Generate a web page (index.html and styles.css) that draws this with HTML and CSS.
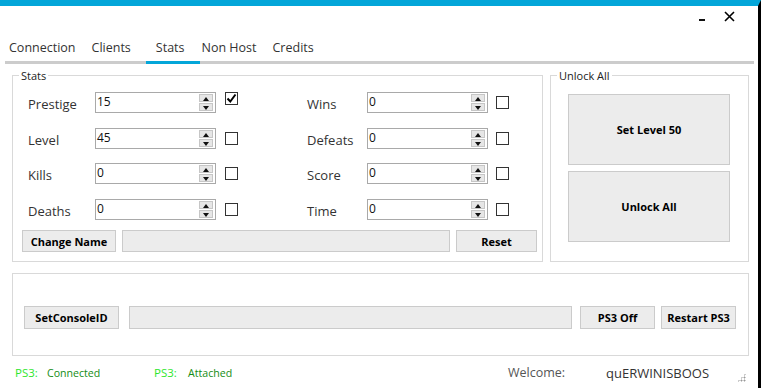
FILE: index.html
```html
<!DOCTYPE html>
<html lang="en">
<head>
    <meta charset="UTF-8">
    <title>PS3 Tool</title>
    <link rel="stylesheet" href="styles.css">
</head>
<body>
    <div class="window">
        <div class="titlebar">
            <span class="ctl-min"></span>
            <svg class="ctl-close" width="11" height="11" viewBox="0 0 11 11">
                <path d="M1 1 L10 10 M10 1 L1 10" stroke="#000" stroke-width="1.6" fill="none"/>
            </svg>
        </div>

        <div class="tabs">
            <span class="tab">Connection</span>
            <span class="tab">Clients</span>
            <span class="tab active">Stats</span>
            <span class="tab">Non Host</span>
            <span class="tab">Credits</span>
        </div>

        <div class="page">
            <div class="top-row">
                <fieldset class="group stats">
                    <legend>Stats</legend>
                    <div class="group-inner">
                        <div class="stat-grid">
                            <span class="stat-label">Prestige</span>
                            <div class="spin"><span class="spin-value">15</span><span class="spin-btns"><i class="up"></i><i class="down"></i></span></div>
                            <span class="check checked"><svg width="11" height="11" viewBox="0 0 11 11"><path d="M1.5 5.5 L4.3 8.5 L9.5 1.5" stroke="#000" stroke-width="2" fill="none"/></svg></span>
                            <span class="stat-label">Wins</span>
                            <div class="spin"><span class="spin-value">0</span><span class="spin-btns"><i class="up"></i><i class="down"></i></span></div>
                            <span class="check"></span>

                            <span class="stat-label">Level</span>
                            <div class="spin"><span class="spin-value">45</span><span class="spin-btns"><i class="up"></i><i class="down"></i></span></div>
                            <span class="check"></span>
                            <span class="stat-label">Defeats</span>
                            <div class="spin"><span class="spin-value">0</span><span class="spin-btns"><i class="up"></i><i class="down"></i></span></div>
                            <span class="check"></span>

                            <span class="stat-label">Kills</span>
                            <div class="spin"><span class="spin-value">0</span><span class="spin-btns"><i class="up"></i><i class="down"></i></span></div>
                            <span class="check"></span>
                            <span class="stat-label">Score</span>
                            <div class="spin"><span class="spin-value">0</span><span class="spin-btns"><i class="up"></i><i class="down"></i></span></div>
                            <span class="check"></span>

                            <span class="stat-label">Deaths</span>
                            <div class="spin"><span class="spin-value">0</span><span class="spin-btns"><i class="up"></i><i class="down"></i></span></div>
                            <span class="check"></span>
                            <span class="stat-label">Time</span>
                            <div class="spin"><span class="spin-value">0</span><span class="spin-btns"><i class="up"></i><i class="down"></i></span></div>
                            <span class="check"></span>
                        </div>
                        <div class="name-row">
                            <button class="btn btn-name">Change Name</button>
                            <div class="textbox"></div>
                            <button class="btn btn-reset">Reset</button>
                        </div>
                    </div>
                </fieldset>

                <fieldset class="group unlock">
                    <legend>Unlock All</legend>
                    <div class="group-inner">
                        <button class="btn btn-big">Set Level 50</button>
                        <button class="btn btn-big">Unlock All</button>
                    </div>
                </fieldset>
            </div>

            <div class="group console">
                <button class="btn btn-console">SetConsoleID</button>
                <div class="textbox"></div>
                <button class="btn btn-ps3">PS3 Off</button>
                <button class="btn btn-ps3 btn-restart">Restart PS3</button>
            </div>

            <div class="status">
                <span class="ps3">PS3:</span>
                <span class="state">Connected</span>
                <span class="ps3 second">PS3:</span>
                <span class="state">Attached</span>
                <span class="welcome">Welcome:</span>
                <span class="user">quERWINISBOOS</span>
                <span class="grip"></span>
            </div>
        </div>
    </div>
</body>
</html>
```

FILE: styles.css
```css
body {
    margin: 0;
    padding: 0;
    background-color: #fff;
    font-family: "Open Sans", "Noto Sans", sans-serif;
    color: #333;
}
* {
    box-sizing: border-box;
}
.window {
    width: 761px;
    height: 388px;
    border-top: 6px solid #04a6d9;
    border-right: 3px solid #000;
    overflow: hidden;
}

/* title bar */
.titlebar {
    height: 29px;
    display: flex;
    justify-content: flex-end;
    align-items: flex-start;
    padding-right: 23px;
}
.ctl-min {
    width: 6px;
    height: 2px;
    background-color: #111;
    margin-top: 13px;
    margin-right: 19px;
}
.ctl-close {
    margin-top: 5px;
}

/* tabs */
.tabs {
    display: flex;
    margin-left: 5px;
    margin-right: 4px;
    border-bottom: 3px solid #cccccc;
    height: 29px;
    font-size: 12.5px;
    color: #333;
}
.tab {
    padding-top: 4px;
    margin-left: 16px;
}
.tab:first-child {
    margin-left: 4px;
}
.tab.active {
    margin-left: 15px;
    padding: 4px 15px 0 10px;
    border-bottom: 3px solid #04a6d9;
    margin-bottom: -3px;
}
.tab.active + .tab {
    margin-left: 2px;
}

.page {
    padding: 0 9px 0 12px;
}

/* group boxes */
.top-row {
    display: flex;
    gap: 7px;
    margin-top: 4px;
}
.group {
    border: 1px solid #d9d9d9;
    margin: 0;
    padding: 0;
    min-width: 0;
}
legend {
    font-size: 11px;
    padding: 0 2px;
    margin-left: 6px;
    color: #222;
}
.stats {
    width: 531px;
}
.stats .group-inner {
    padding: 9px 5px 9px 9px;
}
.unlock {
    width: 199px;
}
.unlock .group-inner {
    padding: 11px 18px 0 17px;
    display: flex;
    flex-direction: column;
    gap: 6px;
}

/* stat rows */
.stat-grid {
    display: grid;
    grid-template-columns: 67px 130px 82px 60px 129px 13px;
    grid-auto-rows: 21px;
    row-gap: 14.5px;
    align-items: center;
    margin-left: 6px;
}
.stat-label {
    font-size: 13px;
    padding-top: 3px;
}
.spin {
    width: 121px;
    height: 21px;
    border: 1px solid #a9a9a9;
    display: flex;
    justify-content: space-between;
    background-color: #fff;
}
.spin-value {
    font-size: 12px;
    padding-left: 1px;
    line-height: 17px;
    color: #111;
}
.spin-btns {
    width: 16px;
    display: flex;
    flex-direction: column;
    padding: 1px 2px 1px 0;
    gap: 1px;
}
.spin-btns i {
    flex: 1;
    background-color: #e6e6e6;
    border: 1px solid #c6c6c6;
    position: relative;
}
.spin-btns i::after {
    content: "";
    position: absolute;
    left: 3px;
    border-left: 3.5px solid transparent;
    border-right: 3.5px solid transparent;
}
.spin-btns .up::after {
    top: 2px;
    border-bottom: 4px solid #111;
}
.spin-btns .down::after {
    top: 2px;
    border-top: 4px solid #111;
}
.check {
    width: 13px;
    height: 13px;
    border: 1px solid #333;
    background-color: #fff;
    display: flex;
}
.check.checked {
    align-self: start;
}

/* buttons */
.btn {
    font-family: "Open Sans", "Noto Sans", sans-serif;
    font-weight: bold;
    font-size: 11px;
    color: #000;
    background-color: #ececec;
    border: 1px solid #cbcbcb;
    padding: 0;
}
.textbox {
    background-color: #ececec;
    border: 1px solid #cbcbcb;
}
.name-row {
    display: flex;
    height: 22px;
    margin-top: 10.5px;
    gap: 6px;
}
.btn-name {
    width: 94px;
}
.name-row .textbox {
    flex: 1;
}
.btn-reset {
    width: 81px;
}
.btn-big {
    height: 71px;
}

.console {
    margin-top: 11px;
    height: 83px;
    padding: 32px 12px 0 11px;
    display: flex;
    align-items: flex-start;
}
.console .btn, .console .textbox {
    height: 23px;
}
.btn-console {
    width: 95px;
}
.console .textbox {
    flex: 1;
    margin: 0 8px 0 10px;
}
.btn-ps3 {
    width: 75px;
}
.btn-restart {
    margin-left: 6px;
}

/* status bar */
.status {
    display: flex;
    align-items: center;
    height: 31px;
    padding-top: 2px;
    font-size: 11.5px;
    position: relative;
}
.ps3 {
    color: #2ee62e;
    margin-left: 3px;
    width: 32px;
}
.ps3.second {
    margin-left: 0;
    width: 34px;
}
.state {
    color: #148c14;
    font-size: 10.6px;
    width: 75px;
}
.state + .ps3 {
    margin-left: 32px;
}
.welcome {
    margin-left: 245px;
    width: 98px;
    font-size: 12.5px;
    color: #555;
}
.user {
    font-size: 13px;
    color: #333;
}
.grip {
    position: absolute;
    right: 3px;
    bottom: 5px;
    width: 9px;
    height: 9px;
    background-image: radial-gradient(circle, #999 0.9px, transparent 1.1px);
    background-size: 3px 3px;
    clip-path: polygon(100% 0, 100% 100%, 0 100%);
}
```
